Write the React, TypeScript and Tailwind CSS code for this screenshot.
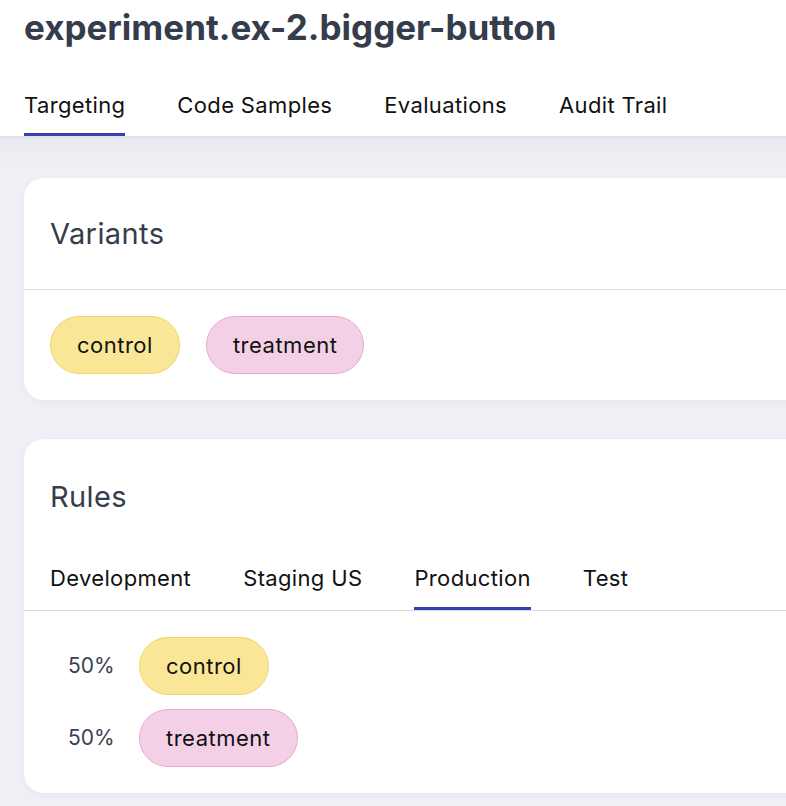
import { useState } from "react";

const pageTabs = ["Targeting", "Code Samples", "Evaluations", "Audit Trail"];
const envTabs = ["Development", "Staging US", "Production", "Test"];

type Variant = { key: string; tone: "yellow" | "pink" };

const variants: Variant[] = [
  { key: "control", tone: "yellow" },
  { key: "treatment", tone: "pink" },
];

function VariantPill({ variant }: { variant: Variant }) {
  return (
    <span
      className={
        variant.tone === "yellow"
          ? "inline-flex h-[58px] items-center rounded-full border border-[#f2d46d] bg-[#f9e697] px-[26px] text-[22px] tracking-[0.5px] text-[#111111]"
          : "inline-flex h-[58px] items-center rounded-full border border-[#e9a9cf] bg-[#f4d0e6] px-[26px] text-[22px] tracking-[0.5px] text-[#111111]"
      }
    >
      {variant.key}
    </span>
  );
}

export default function App() {
  const [selectedTab, setSelectedTab] = useState("Targeting");
  const [selectedEnv, setSelectedEnv] = useState("Production");

  return (
    <div
      className="min-h-[806px] overflow-hidden bg-[#eff0f5]"
      style={{ fontFamily: "Inter, 'Noto Sans', sans-serif" }}
    >
      <header className="bg-white">
        <h1 className="px-6 pt-[5px] text-[35px] font-bold leading-[44px] text-[#353c4c]">
          experiment.ex-2.bigger-button
        </h1>
        <nav className="mt-[44px] flex gap-[52px] border-b-2 border-[#e3e4e8] px-6">
          {pageTabs.map((tab) => (
            <button
              key={tab}
              type="button"
              onClick={() => setSelectedTab(tab)}
              className={
                tab === selectedTab
                  ? "border-b-[3px] border-[#3541b0] pb-[16px] text-[22px] leading-[24px] tracking-[0.35px] text-[#111111]"
                  : "border-b-[3px] border-transparent pb-[16px] text-[22px] leading-[24px] tracking-[0.35px] text-[#111111]"
              }
            >
              {tab}
            </button>
          ))}
        </nav>
      </header>

      <main className="grid gap-[39px] bg-[linear-gradient(180deg,#e9eaf0_0px,#eff0f5_30px)] pl-6 pt-[40px]">
        <section className="w-[900px] rounded-[20px] bg-white shadow-[0_2px_10px_rgba(30,40,70,0.04)]">
          <h2 className="h-[111px] px-[26px] pt-[38px] text-[29px] leading-[36px] tracking-[0.4px] text-[#353c4c]">
            Variants
          </h2>
          <div className="flex gap-[26px] border-t border-[#dcdde2] px-[26px] pt-[26px] pb-[26px]">
            {variants.map((variant) => (
              <VariantPill key={variant.key} variant={variant} />
            ))}
          </div>
        </section>

        <section className="w-[900px] rounded-[20px] bg-white pb-[26px] shadow-[0_2px_10px_rgba(30,40,70,0.04)]">
          <h2 className="px-[26px] pt-[40px] text-[29px] leading-[36px] tracking-[0.4px] text-[#353c4c]">
            Rules
          </h2>
          <nav className="mt-[51px] flex gap-[52px] border-b border-[#d8d9df] px-[26px]">
            {envTabs.map((env) => (
              <button
                key={env}
                type="button"
                onClick={() => setSelectedEnv(env)}
                className={
                  env === selectedEnv
                    ? "border-b-[3px] border-[#3541b0] pb-[17px] text-[22px] leading-[24px] tracking-[0.35px] text-[#111111]"
                    : "border-b-[3px] border-transparent pb-[17px] text-[22px] leading-[24px] tracking-[0.35px] text-[#111111]"
                }
              >
                {env}
              </button>
            ))}
          </nav>
          <div className="grid gap-[14px] pt-[26px] pl-[44px]">
            {variants.map((variant) => (
              <div key={variant.key} className="flex items-center gap-[25px]">
                <span className="w-[46px] text-[21px] text-[#3a4152]">50%</span>
                <VariantPill variant={variant} />
              </div>
            ))}
          </div>
        </section>
      </main>
    </div>
  );
}
